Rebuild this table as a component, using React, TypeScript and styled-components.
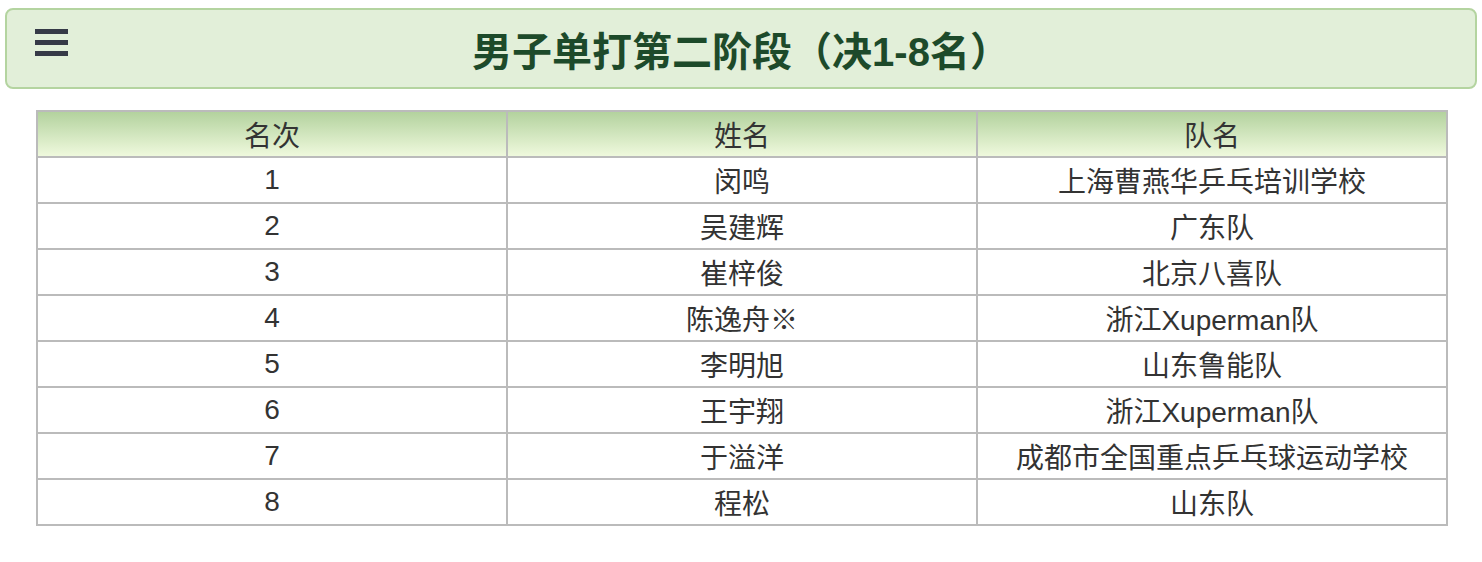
import styled, { createGlobalStyle } from 'styled-components';

const GlobalStyle = createGlobalStyle`
  body {
    margin: 0;
    background: #fff;
    font-family: "Liberation Sans", "Noto Sans CJK SC", sans-serif;
    color: #333;
  }
`;

const Page = styled.div`
  padding: 8px 5px 0;
`;

const Header = styled.header`
  display: grid;
  grid-template-columns: 1fr auto 1fr;
  align-items: center;
  height: 77px;
  background: #e2efd9;
  border: 2px solid #b4d4a0;
  border-radius: 8px;
`;

const MenuButton = styled.button`
  justify-self: start;
  align-self: start;
  display: flex;
  flex-direction: column;
  gap: 6px;
  margin: 19px 0 0 28px;
  padding: 0;
  border: none;
  background: none;
  cursor: pointer;
`;

const Bar = styled.span`
  display: block;
  width: 33px;
  height: 5px;
  background: #363a47;
`;

const Title = styled.h1`
  margin: 0;
  font-size: 40px;
  font-weight: 700;
  color: #1d4a2a;
  letter-spacing: 0;
`;

const TableWrap = styled.div`
  padding: 21px 29px 0 31px;
`;

const Table = styled.table`
  width: 1412px;
  border-collapse: collapse;
  table-layout: fixed;
  font-size: 28px;
`;

const Th = styled.th`
  height: 44px;
  padding: 0;
  font-weight: 400;
  color: #333;
  text-align: center;
  border: 2px solid #bbb;
  background: linear-gradient(to bottom, #b3d29e, #eff9dd);
`;

const Td = styled.td`
  height: 44px;
  padding: 0;
  text-align: center;
  color: #333;
  border: 2px solid #bbb;
`;

const rows = [
  ['1', '闵鸣', '上海曹燕华乒乓培训学校'],
  ['2', '吴建辉', '广东队'],
  ['3', '崔梓俊', '北京八喜队'],
  ['4', '陈逸舟※', '浙江Xuperman队'],
  ['5', '李明旭', '山东鲁能队'],
  ['6', '王宇翔', '浙江Xuperman队'],
  ['7', '于溢洋', '成都市全国重点乒乓球运动学校'],
  ['8', '程松', '山东队'],
];

export default function App() {
  return (
    <Page>
      <GlobalStyle />
      <Header>
        <MenuButton aria-label="菜单">
          <Bar />
          <Bar />
          <Bar />
        </MenuButton>
        <Title>男子单打第二阶段（决1-8名）</Title>
        <span />
      </Header>
      <TableWrap>
        <Table>
          <thead>
            <tr>
              <Th>名次</Th>
              <Th>姓名</Th>
              <Th>队名</Th>
            </tr>
          </thead>
          <tbody>
            {rows.map(([rank, name, team]) => (
              <tr key={rank}>
                <Td>{rank}</Td>
                <Td>{name}</Td>
                <Td>{team}</Td>
              </tr>
            ))}
          </tbody>
        </Table>
      </TableWrap>
    </Page>
  );
}
